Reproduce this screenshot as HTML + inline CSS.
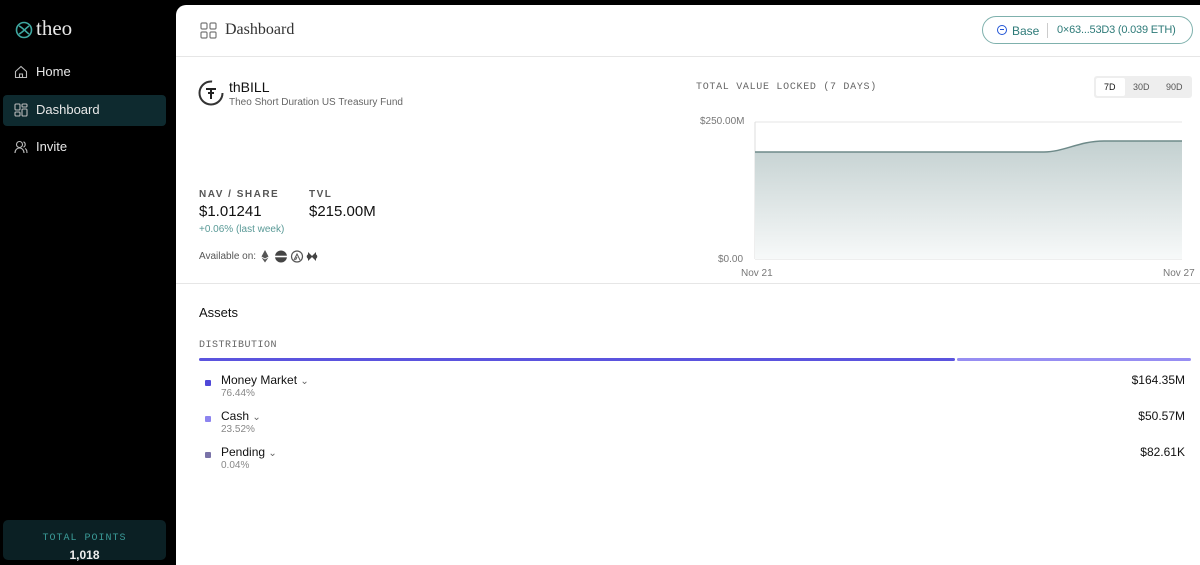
<!DOCTYPE html>
<html><head><meta charset="utf-8"><style>
*{margin:0;padding:0;box-sizing:border-box}
body{width:1200px;height:555px;background:#000;font-family:"Liberation Sans",sans-serif;position:relative;overflow:hidden;color:#111}
.abs{position:absolute}
.side a{position:absolute;left:14px;color:#e8e8e8;font-size:13px;display:flex;align-items:center;gap:8px}
.main{position:absolute;left:176px;top:5px;width:1024px;height:560px;background:#fff;border-top-left-radius:10px}
.mono{font-family:"Liberation Mono",monospace;letter-spacing:2px;color:#666;font-size:10px}
.lbl{font-size:10px;letter-spacing:1.5px;color:#555;font-weight:bold}
.row{position:absolute;left:205px}
.row .sq{position:absolute;left:0;top:7px;width:6px;height:6px;border-radius:1px}
.row .t{position:absolute;left:16px;top:0;font-size:12px;color:#111;white-space:nowrap}
.row .p{position:absolute;left:16px;top:15px;font-size:10px;color:#888}
.row .v{position:absolute;left:900px;width:80px;top:0;font-size:12px;text-align:right;color:#111}
</style></head><body>
<div class="side">
<svg class="abs" style="left:15px;top:21px" width="18" height="18" viewBox="0 0 18 18" fill="none" stroke="#3fa7a0" stroke-width="1.6"><circle cx="9" cy="9" r="7.5"/><path d="M4 5c3 1 7 6 10 8M4 13c3-1 7-6 10-8"/></svg>
<div class="abs" style="left:36px;top:16px;font-family:'Liberation Serif',serif;font-size:21px;color:#e8e8e8">theo</div>
<a style="top:64px"><svg width="14" height="14" viewBox="0 0 14 14" fill="none" stroke="#bbb" stroke-width="1.1"><path d="M1.5 6.5L7 1.5l5.5 5V12.5h-11z"/><path d="M5.5 12.5V9h3v3.5"/></svg>Home</a>
<div class="abs" style="left:3px;top:95px;width:163px;height:31px;background:#0e2a2f;border-radius:4px"></div>
<a style="top:102px"><svg width="14" height="14" viewBox="0 0 14 14" fill="none" stroke="#bbb" stroke-width="1.1"><rect x="1" y="1" width="5" height="6" rx="1"/><rect x="8" y="1" width="5" height="3" rx="1"/><rect x="1" y="9" width="5" height="4" rx="1"/><rect x="8" y="6" width="5" height="7" rx="1"/></svg>Dashboard</a>
<a style="top:139px"><svg width="14" height="14" viewBox="0 0 14 14" fill="none" stroke="#bbb" stroke-width="1.1"><circle cx="5.5" cy="4.5" r="3"/><path d="M1 13c0-3 2-5 4.5-5s4.5 2 4.5 5M9.5 1.8a3 3 0 010 5.4M11 8.5c1.3.6 2 2.3 2 4.5"/></svg>Invite</a>
<div class="abs" style="left:3px;top:520px;width:163px;height:40px;background:#0b2024;border-radius:5px"></div>
<div class="abs mono" style="left:3px;width:163px;text-align:center;top:533px;color:#3b9b98;font-size:10px;letter-spacing:1px">TOTAL POINTS</div>
<div class="abs" style="left:3px;width:163px;text-align:center;top:548px;color:#eee;font-size:12px;font-weight:bold">1,018</div>
</div>
<div class="main"></div>
<svg class="abs" style="left:200px;top:22px" width="17" height="17" viewBox="0 0 17 17" fill="none" stroke="#777" stroke-width="1.2"><rect x="1" y="1" width="6" height="6" rx="1.2"/><rect x="10" y="1" width="6" height="6" rx="1.2"/><rect x="1" y="10" width="6" height="6" rx="1.2"/><rect x="10" y="10" width="6" height="6" rx="1.2"/></svg>
<div class="abs" style="left:225px;top:21px;font-family:'Liberation Serif',serif;font-size:16px;color:#333">Dashboard</div>
<div class="abs" style="left:982px;top:16px;width:211px;height:28px;border:1px solid #7fb1ad;border-radius:14px;font-size:11px;color:#2d7a78">
<div class="abs" style="left:14px;top:8px;width:10px;height:10px;border:1.6px solid #2255d6;border-radius:50%"><div style="position:absolute;left:1.5px;top:2.5px;width:4px;height:1.5px;background:#2255d6"></div></div>
<div class="abs" style="left:29px;top:7px;font-size:12px">Base</div>
<div class="abs" style="left:64px;top:6px;width:1px;height:15px;background:#ccc"></div>
<div class="abs" style="left:74px;top:7px;white-space:nowrap;letter-spacing:-0.2px">0×63...53D3 (0.039 ETH)</div>
</div>
<div class="abs" style="left:176px;top:56px;width:1024px;height:1px;background:#e6e6e6"></div>
<svg class="abs" style="left:198px;top:80px" width="26" height="26" viewBox="0 0 26 26" fill="none"><circle cx="13" cy="13" r="11.5" stroke="#333" stroke-width="2" stroke-dasharray="55 18"/><path d="M8 9h10M13 9v10M10 13h6" stroke="#222" stroke-width="2"/></svg>
<div class="abs" style="left:229px;top:79px;font-size:14px">thBILL</div>
<div class="abs" style="left:229px;top:97px;font-size:10px;color:#666">Theo Short Duration US Treasury Fund</div>
<div class="abs lbl" style="left:199px;top:189px">NAV / SHARE</div>
<div class="abs lbl" style="left:309px;top:189px">TVL</div>
<div class="abs" style="left:199px;top:203px;font-size:15px">$1.01241</div>
<div class="abs" style="left:309px;top:203px;font-size:15px">$215.00M</div>
<div class="abs" style="left:199px;top:224px;font-size:10px;color:#5a9a97">+0.06% (last week)</div>
<div class="abs" style="left:199px;top:251px;font-size:10px;color:#555">Available on:</div>
<svg class="abs" style="left:260px;top:250px" width="62" height="13" viewBox="0 0 62 13"><path d="M5 0L1.5 6.5 5 8.5 8.5 6.5zM1.5 7.5L5 12.5 8.5 7.5 5 9.5z" fill="#555"/><circle cx="21" cy="6.5" r="6" fill="#444"/><rect x="15" y="5.7" width="12" height="1.6" fill="#fff"/><circle cx="37" cy="6.5" r="5.5" fill="none" stroke="#555" stroke-width="1.2"/><path d="M34 10l3-6 3 6M35.5 10l1.5-3" stroke="#555" fill="none"/><path d="M48 2l4 4 4-4v9l-4-4-4 4z" fill="#444"/><circle cx="49" cy="6.5" r="2.3" fill="#444"/><circle cx="55" cy="6.5" r="2.3" fill="#444"/></svg>
<div class="abs mono" style="left:696px;top:82px;font-size:10px;letter-spacing:0.7px">TOTAL VALUE LOCKED (7 DAYS)</div>
<div class="abs" style="left:1094px;top:76px;width:98px;height:22px;background:#eee;border-radius:3px;font-size:9px;color:#555">
<div class="abs" style="left:2px;top:2px;width:29px;height:18px;background:#fff;border-radius:2px"></div>
<div class="abs" style="left:10px;top:6px;color:#111">7D</div><div class="abs" style="left:39px;top:6px">30D</div><div class="abs" style="left:72px;top:6px">90D</div></div>
<div class="abs" style="left:700px;top:116px;font-size:10px;color:#777">$250.00M</div>
<div class="abs" style="left:718px;top:254px;font-size:10px;color:#777">$0.00</div>
<div class="abs" style="left:741px;top:268px;font-size:10px;color:#777">Nov 21</div>
<div class="abs" style="left:1163px;top:268px;font-size:10px;color:#777">Nov 27</div>
<svg class="abs" style="left:754px;top:121px" width="430" height="140" viewBox="0 0 430 140"><defs><linearGradient id="g" x1="0" y1="0" x2="0" y2="1"><stop offset="0" stop-color="#c3d0d0"/><stop offset="1" stop-color="#f7f9f9"/></linearGradient></defs>
<line x1="1" y1="1" x2="428" y2="1" stroke="#e4e4e4"/><line x1="1" y1="1" x2="1" y2="138" stroke="#ddd"/><line x1="1" y1="138" x2="428" y2="138" stroke="#ddd"/>
<path d="M1 31H290C310 31 325 20 350 20H428V138H1z" fill="url(#g)"/><path d="M1 31H290C310 31 325 20 350 20H428" fill="none" stroke="#6e8a89" stroke-width="1.5"/></svg>
<div class="abs" style="left:176px;top:283px;width:1024px;height:1px;background:#e6e6e6"></div>
<div class="abs" style="left:199px;top:305px;font-size:13px">Assets</div>
<div class="abs mono" style="left:199px;top:340px;font-size:10px;letter-spacing:0.5px">DISTRIBUTION</div>
<div class="abs" style="left:199px;top:358px;width:756px;height:3px;background:#5b54de;border-radius:2px"></div>
<div class="abs" style="left:957px;top:358px;width:234px;height:3px;background:#978ef2;border-radius:2px"></div>
<div class="row" style="top:373px"><div class="sq" style="background:#5048d8"></div><div class="t">Money Market <span style="color:#666;font-size:10px">&#8964;</span></div><div class="p">76.44%</div><div class="v">$164.35M</div></div>
<div class="row" style="top:409px"><div class="sq" style="background:#8d84ef"></div><div class="t">Cash <span style="color:#666;font-size:10px">&#8964;</span></div><div class="p">23.52%</div><div class="v">$50.57M</div></div>
<div class="row" style="top:445px"><div class="sq" style="background:#7a73a8"></div><div class="t">Pending <span style="color:#666;font-size:10px">&#8964;</span></div><div class="p">0.04%</div><div class="v">$82.61K</div></div>
</body></html>
